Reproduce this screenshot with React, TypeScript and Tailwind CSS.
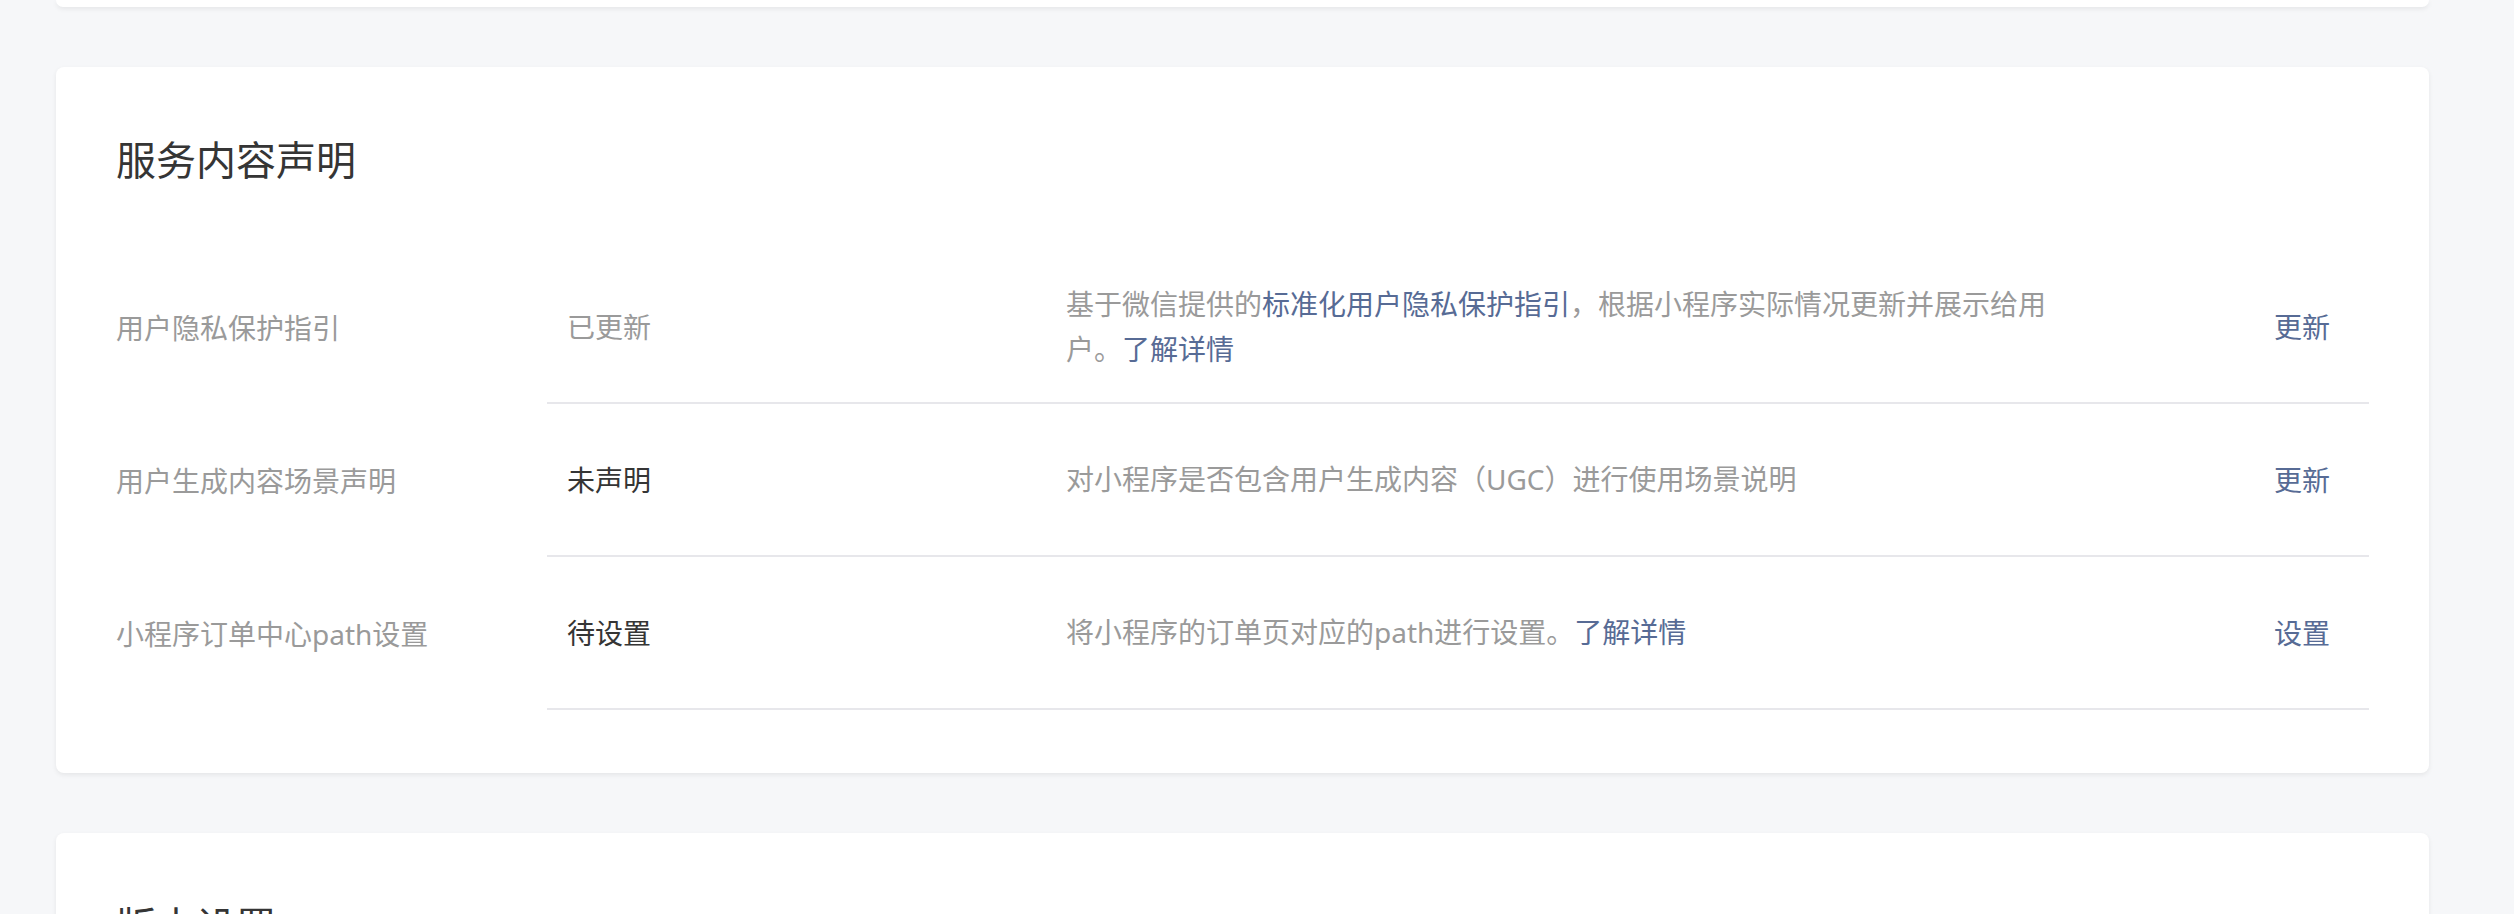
const rows = [
  {
    label: "用户隐私保护指引",
    status: "已更新",
    muted: true,
    desc: (
      <>
        基于微信提供的<a className="text-[#576b95]">标准化用户隐私保护指引</a>
        ，根据小程序实际情况更新并展示给用户。
        <a className="text-[#576b95]">了解详情</a>
      </>
    ),
    action: "更新",
  },
  {
    label: "用户生成内容场景声明",
    status: "未声明",
    muted: false,
    desc: <>对小程序是否包含用户生成内容（UGC）进行使用场景说明</>,
    action: "更新",
  },
  {
    label: "小程序订单中心path设置",
    status: "待设置",
    muted: false,
    desc: (
      <>
        将小程序的订单页对应的path进行设置。
        <a className="text-[#576b95]">了解详情</a>
      </>
    ),
    action: "设置",
  },
];

function Card({ title, children }: { title: string; children?: React.ReactNode }) {
  return (
    <section className="ml-[56px] mr-[85px] rounded-[8px] bg-white px-[60px] pt-[65px] pb-[63px] shadow-[0_2px_5px_rgba(0,0,0,0.07)]">
      <h2 className="text-[40px] leading-[56px] text-[#353535]">{title}</h2>
      {children}
    </section>
  );
}

export default function App() {
  return (
    <div className="min-h-screen overflow-hidden bg-[#f6f7f9] font-['Noto_Sans','Noto_Sans_CJK_SC',sans-serif] text-[28px]">
      {/* tail of the card above */}
      <div className="ml-[56px] mr-[85px] h-[7px] rounded-b-[8px] bg-white shadow-[0_2px_5px_rgba(0,0,0,0.07)]" />

      <div className="mt-[60px]">
        <Card title="服务内容声明">
          <div className="mt-[63px]">
            {rows.map((r) => (
              <div key={r.label} className="flex">
                <div className="flex w-[431px] items-center text-[#9a9a9a]">{r.label}</div>
                <div className="flex h-[153px] flex-1 items-center border-b-2 border-[#e7e7eb]">
                  <div
                    className={
                      r.muted
                        ? "w-[519px] pl-[20px] text-[#9a9a9a]"
                        : "w-[519px] pl-[20px] text-[#353535]"
                    }
                  >
                    {r.status}
                  </div>
                  <div className="w-[1000px] leading-[45px] text-[#9a9a9a]">{r.desc}</div>
                  <div className="ml-auto w-[95px] text-[#576b95]">{r.action}</div>
                </div>
              </div>
            ))}
          </div>
        </Card>
      </div>

      <div className="mt-[60px]">
        <Card title="版本设置" />
      </div>
    </div>
  );
}
